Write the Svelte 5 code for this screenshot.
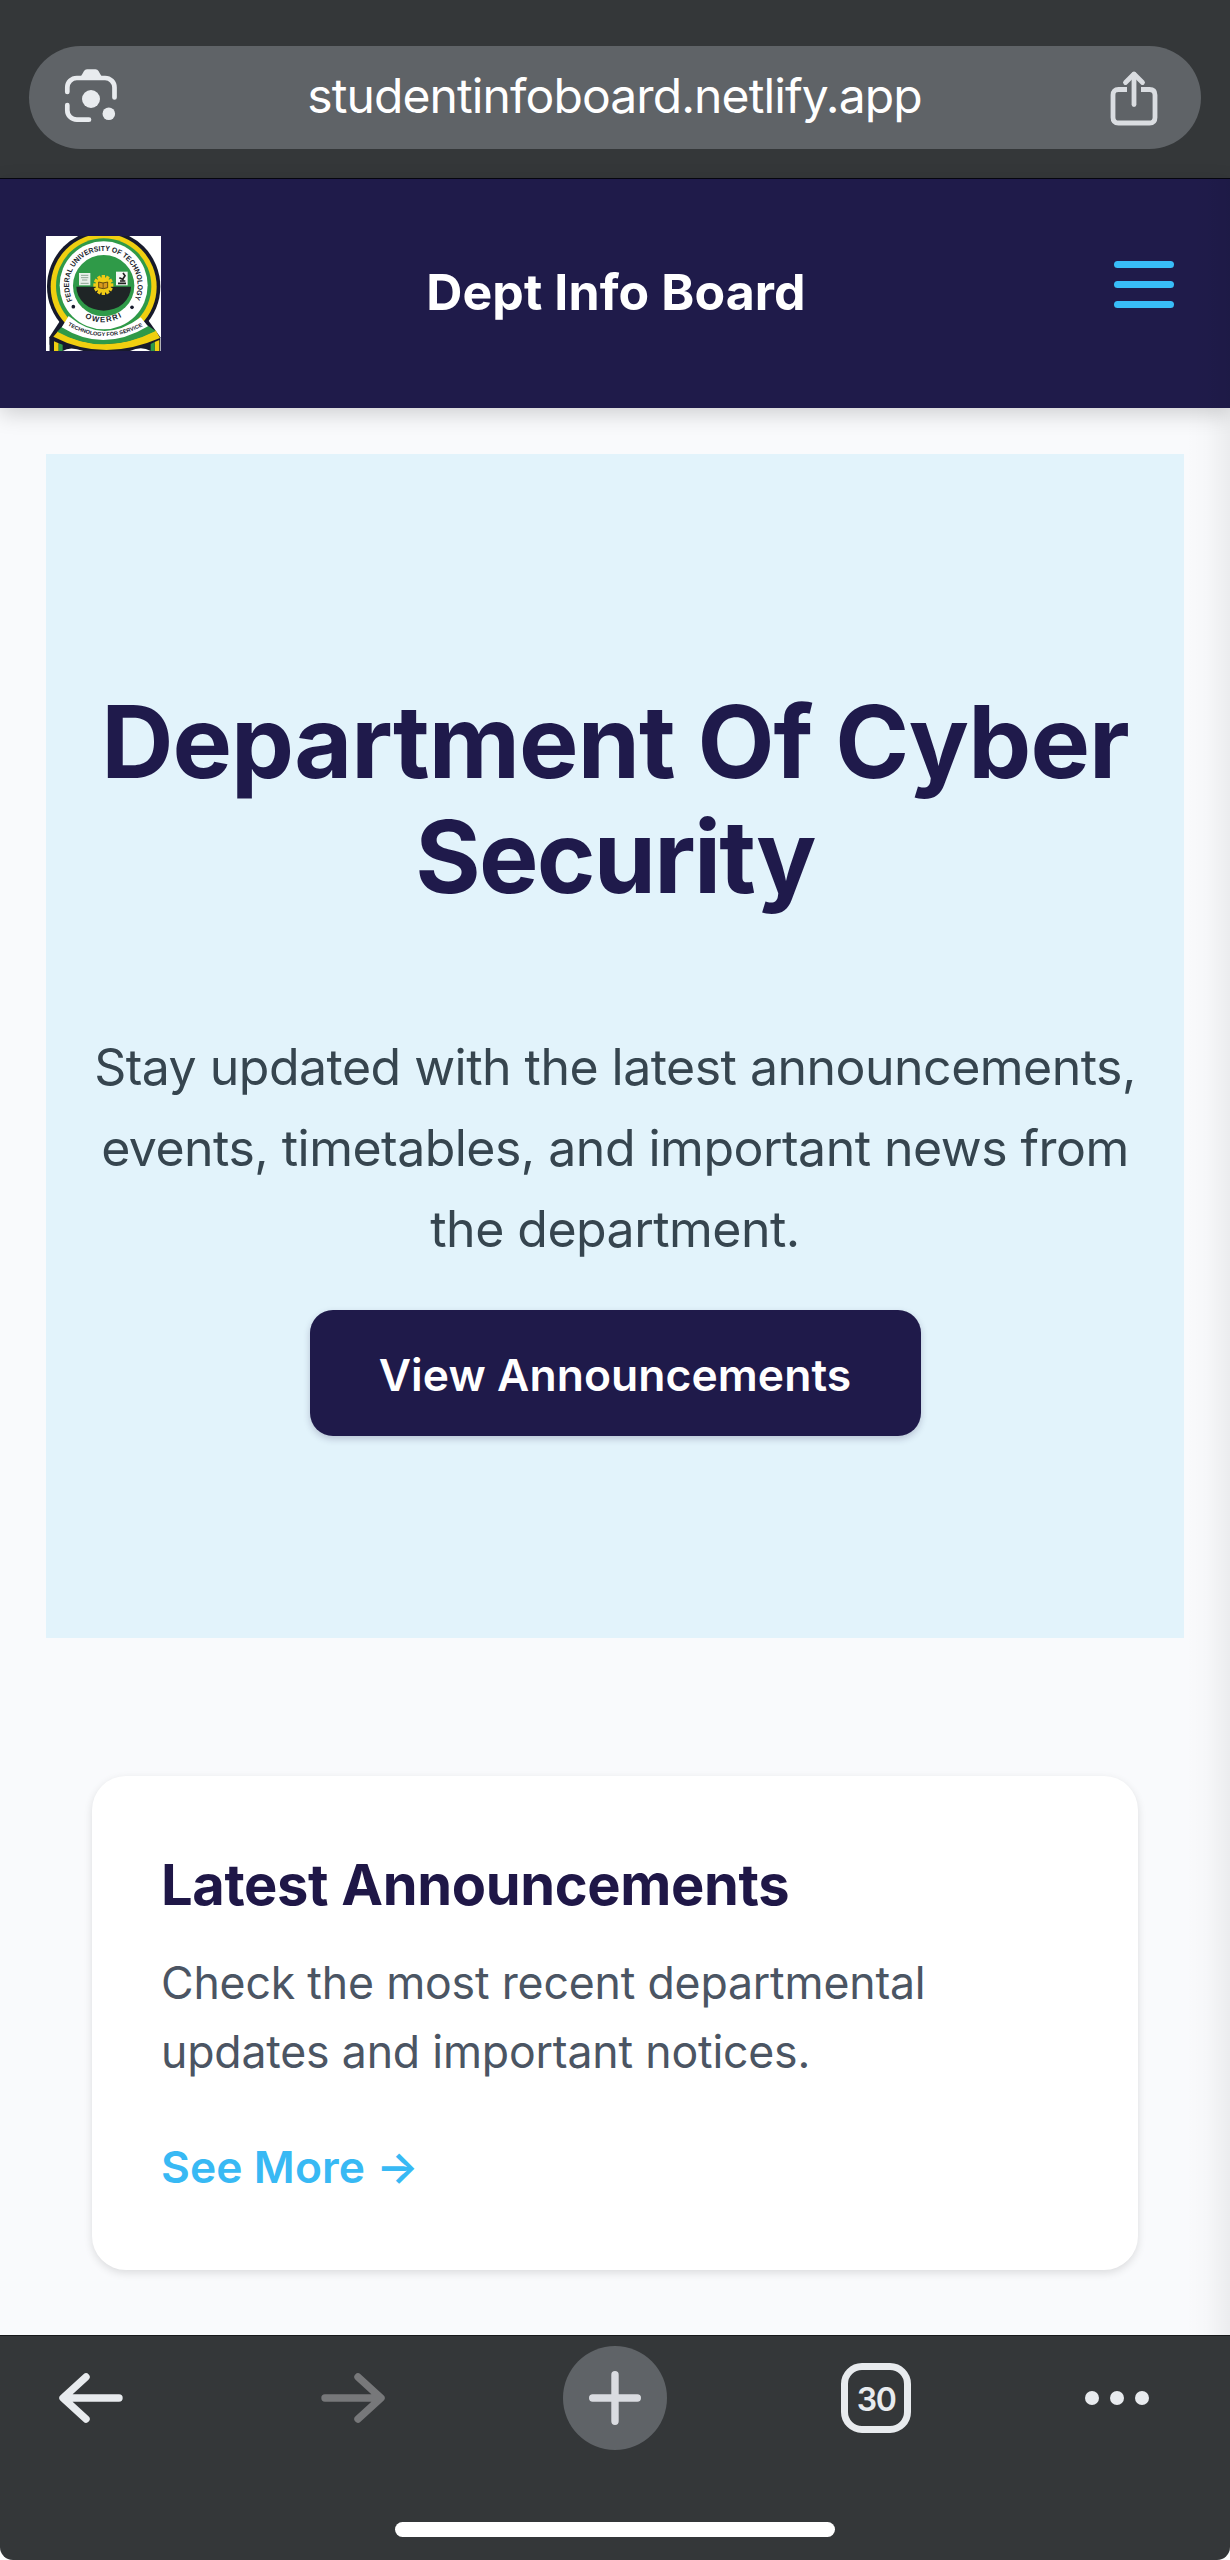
<script>
  const host = 'studentinfoboard.netlify.app';
  const openTabs = 30;
  const gearTeeth = Array.from({ length: 12 }, (_, i) => i * 30);
</script>

<div class="screen">
  <header class="browser-bar">
    <div class="address">
      <svg class="lens" width="55" height="56" viewBox="0 0 55 56">
        <g fill="none" stroke="#e8ebee" stroke-width="4.7" stroke-linecap="round">
          <path d="M3.3 24V19.5a9.5 9.5 0 0 1 9.5-9.5H41a9.5 9.5 0 0 1 9.5 9.5V29.5" />
          <path d="M3.3 37V42.2a9.5 9.5 0 0 0 9.5 9.5H25" />
        </g>
        <path d="M16 10L20 3Q21 1.300 23 1.300H31.500Q33.500 1.300 34.500 3L38.500 10Z" fill="#e8ebee" />
        <circle cx="27" cy="31" r="9" fill="#e8ebee" />
        <circle cx="44.8" cy="45.8" r="6.3" fill="#e8ebee" />
      </svg>
      <span class="host">{host}</span>
      <svg class="share" width="48" height="56" viewBox="0 0 48 56">
        <g fill="none" stroke="#dadde1" stroke-width="4.8" stroke-linecap="round" stroke-linejoin="round">
          <path d="M24 4.500V34.500" />
          <path d="M15.500 12.500L24 4L32.500 12.500" />
          <path stroke-linecap="butt" d="M17 19.500H8.500Q3 19.500 3 25V47.500Q3 53 8.500 53H39.500Q45 53 45 47.500V25Q45 19.500 39.500 19.500H31" />
        </g>
      </svg>
    </div>
  </header>

  <main class="page">
    <nav class="site-header">
      <svg class="crest" width="115" height="115" viewBox="48 46 345 345">
        <defs>
          <path id="arc-top" d="M128 240A103 103 0 1 1 312 240" />
          <path id="arc-city" d="M164 291Q220 320 280 287" />
          <path id="arc-motto" d="M113 314Q220 376 334 318" />
        </defs>
        <rect x="48" y="46" width="345" height="345" fill="#fff" />
        <circle cx="221" cy="198" r="170" fill="#171a2c" />
        <path d="M100 285L58 350V391H391V350L345 285Z" fill="#171a2c" />
        <circle cx="221" cy="198" r="159" fill="#f0cf10" />
        <circle cx="221" cy="196" r="143" fill="#2f9a48" />
        <circle cx="221" cy="194" r="132" fill="#fff" />
        <circle cx="221" cy="195" r="92" fill="#2f9a48" />
        <path d="M139 198H303A82 72 0 0 1 139 198Z" fill="#1f2526" />
        <rect x="147" y="157" width="34" height="37" fill="#e9f0ea" />
        <path d="M153 164H175M153 171H175M156 178H172M152 188H176" stroke="#8fa596" stroke-width="3" />
        <rect x="258" y="153" width="35" height="41" fill="#f5f7f5" />
        <path d="M279 157L285 165L279 174M268 171L281 177M264 188H288M270 181H286" fill="none" stroke="#222" stroke-width="5" />
        <g fill="#f1cb16">
          {#each gearTeeth as angle}
            <rect x="215" y="163" width="10" height="12" transform="rotate({angle} 220 193)" />
          {/each}
          <circle cx="220" cy="193" r="23" />
        </g>
        <path d="M206 184L219 187L233 184V201L220 204L206 201Z" fill="#d99a1c" stroke="#4a3a10" stroke-width="2.5" />
        <path d="M219.500 187V203" stroke="#4a3a10" stroke-width="2" />
        <circle cx="130" cy="258" r="5.500" fill="#171a2c" />
        <circle cx="306" cy="260" r="5.500" fill="#171a2c" />
        <path d="M48 391V372H58V391ZM391 391V360" fill="#fff" />
        <path d="M72 391V362L86 368V391ZM374 391V364L388 358V391Z" fill="#f0cf10" />
        <path d="M86 391V368L98 372V391ZM362 391V370L374 364V391Z" fill="#2f9a48" />
        <path d="M98 391Q120 376 160 391ZM300 391Q334 374 362 391Z" fill="#fff" />
        <path d="M84 332Q220 410 377 329L390 352Q220 426 70 348Z" fill="#f0cf10" />
        <path d="M98 316Q220 394 352 314L377 331Q220 410 82 333Z" fill="#2f9a48" />
        <path d="M116 286Q220 374 332 290L354 317Q220 398 95 320Z" fill="#fff" />
        <g class="crest-text">
          <text font-size="22"><textPath href="#arc-top" textLength="415" lengthAdjust="spacingAndGlyphs">FEDERAL UNIVERSITY OF TECHNOLOGY</textPath></text>
          <text font-size="23"><textPath href="#arc-city" textLength="116">OWERRI</textPath></text>
          <text font-size="16"><textPath href="#arc-motto" textLength="236" lengthAdjust="spacingAndGlyphs">TECHNOLOGY FOR SERVICE</textPath></text>
        </g>
      </svg>
      <h2>Dept Info Board</h2>
      <div class="burger"><i></i><i></i><i></i></div>
    </nav>

    <section class="hero">
      <h1>Department Of Cyber <span>Security</span></h1>
      <p>Stay updated with the latest announcements, events, timetables, and important news from the department.</p>
      <button>View Announcements</button>
    </section>

    <article class="card">
      <h3>Latest Announcements</h3>
      <p>Check the most recent departmental updates and important notices.</p>
      <a href="#announcements">See More →</a>
    </article>
  </main>

  <footer class="toolbar">
    <div class="tools">
      <svg width="66" height="56" viewBox="0 0 66 56">
        <path d="M61 28H6M28 7L5 28L28 49" fill="none" stroke="#e8ebee" stroke-width="7.4" stroke-linecap="round" stroke-linejoin="round" />
      </svg>
      <svg width="66" height="56" viewBox="0 0 66 56">
        <path d="M5 28H60M38 7L61 28L38 49" fill="none" stroke="#77787a" stroke-width="7.4" stroke-linecap="round" stroke-linejoin="round" />
      </svg>
      <div class="add">
        <svg width="52" height="54" viewBox="0 0 52 54">
          <path d="M26 3.700V50.300M3.700 27H48.300" stroke="#dadce1" stroke-width="7.4" stroke-linecap="round" />
        </svg>
      </div>
      <div class="tabs">{openTabs}</div>
      <div class="more"><i></i><i></i><i></i></div>
    </div>
    <div class="home"></div>
  </footer>
</div>

<style>
  :global(body) {
    background: #fff;
  }

  .screen {
    width: 1230px;
    height: 2560px;
    display: flex;
    flex-direction: column;
    overflow: hidden;
    font-family: Inter, "Liberation Sans", sans-serif;
  }

  h1, h2, h3, p {
    margin: 0;
  }

  .browser-bar {
    flex: none;
    box-sizing: border-box;
    height: 179px;
    padding: 46px 29px 0;
    background: #343739;
    border-bottom: 1px solid #060610;
  }

  .address {
    box-sizing: border-box;
    height: 103px;
    padding: 0 43px 0 35px;
    border-radius: 52px;
    background: #5f6367;
    display: flex;
    align-items: center;
    justify-content: space-between;
  }

  .lens {
    margin-bottom: 4px;
  }

  .share {
    margin-top: 1px;
  }

  .host {
    padding-bottom: 4px;
    color: #fff;
    font-size: 48px;
    letter-spacing: -0.9px;
  }

  .page {
    position: relative;
    flex: none;
    height: 2156px;
    background: #f9fafc;
    display: flex;
    flex-direction: column;
  }

  /* Soft edge cast by the closed side menu. */
  .page::after {
    content: "";
    position: absolute;
    top: 0;
    right: 0;
    bottom: 0;
    width: 44px;
    background: linear-gradient(to right, rgba(0, 0, 0, 0), rgba(0, 0, 0, 0.012) 45%, rgba(0, 0, 0, 0.055));
  }

  .site-header {
    flex: none;
    box-sizing: border-box;
    height: 229px;
    padding: 0 56px 0 46px;
    background: #1f1b4a;
    box-shadow: 0 6px 20px rgba(0, 0, 0, 0.17);
    display: grid;
    grid-template-columns: 115px 1fr 60px;
    align-items: center;
  }

  .crest {
    display: block;
  }

  .crest-text {
    font-family: "Liberation Sans", sans-serif;
    font-weight: 700;
    fill: #20242c;
  }

  h2 {
    padding-bottom: 3px;
    margin-right: 43px;
    color: #fff;
    font-size: 50px;
    font-weight: 700;
    letter-spacing: 0.1px;
    text-align: center;
  }

  .burger {
    display: flex;
    flex-direction: column;
    gap: 13px;
    padding-bottom: 18px;
  }

  .burger i {
    height: 7px;
    border-radius: 4px;
    background: #38bdf8;
  }

  .hero {
    flex: none;
    box-sizing: border-box;
    height: 1184px;
    margin: 46px 46px 0;
    padding-top: 230px;
    background: #e2f3fb;
    display: flex;
    flex-direction: column;
    align-items: center;
    text-align: center;
  }

  h1 {
    width: 1060px;
    color: #1f1a4b;
    font-size: 100px;
    line-height: 115.2px;
    font-weight: 700;
    letter-spacing: -0.93px;
  }

  h1 span {
    letter-spacing: -1.8px;
  }

  .hero p {
    width: 1060px;
    margin-top: 113px;
    color: #36454f;
    font-size: 50px;
    line-height: 80.64px;
    letter-spacing: -0.52px;
  }

  button {
    width: 611px;
    height: 126px;
    margin-top: 41px;
    padding: 3px 0 0;
    border: 0;
    border-radius: 23px;
    background: #1f1a4a;
    box-shadow: 0 3px 7px rgba(30, 27, 75, 0.22);
    color: #fff;
    font: 600 44.4px Inter, "Liberation Sans", sans-serif;
    letter-spacing: 0.08px;
  }

  .card {
    flex: none;
    box-sizing: border-box;
    height: 494px;
    margin: 138px 92px 0;
    padding: 77px 69px 0;
    border-radius: 34px;
    background: #fff;
    box-shadow: 0 3px 9px rgba(0, 0, 0, 0.12);
  }

  h3 {
    color: #1f1747;
    font-size: 56px;
    line-height: 64px;
    font-weight: 700;
    letter-spacing: -0.35px;
  }

  .card p {
    width: 800px;
    margin-top: 32px;
    color: #4b5563;
    font-size: 44.6px;
    line-height: 69px;
    letter-spacing: -0.18px;
  }

  .card a {
    display: block;
    margin-top: 46px;
    color: #38b9f4;
    font-size: 44.4px;
    line-height: 69px;
    font-weight: 600;
    letter-spacing: 0.08px;
    text-decoration: none;
  }

  .toolbar {
    flex: none;
    box-sizing: border-box;
    height: 225px;
    padding-top: 10px;
    border-top: 1px solid #17191b;
    border-radius: 0 0 13px 13px;
    background: #343739;
  }

  .tools {
    height: 104px;
    padding-left: 58px;
    display: grid;
    grid-template-columns: 262px 243px 278px 244px 66px;
    align-items: center;
  }

  .add {
    width: 104px;
    height: 104px;
    border-radius: 50%;
    background: #5f6367;
    display: grid;
    place-items: center;
  }

  .tabs {
    box-sizing: border-box;
    width: 70px;
    height: 70px;
    border: 7px solid #e8ebee;
    border-radius: 21px;
    display: grid;
    place-items: center;
    padding-top: 2px;
    color: #e8ebee;
    font-size: 32px;
    font-weight: 600;
    letter-spacing: -1.5px;
  }

  .more {
    display: flex;
    gap: 11px;
  }

  .more i {
    width: 14px;
    height: 14px;
    border-radius: 50%;
    background: #e8ebee;
  }

  .home {
    width: 440px;
    height: 15px;
    margin: 72px auto 0;
    border-radius: 8px;
    background: #fff;
  }
</style>
